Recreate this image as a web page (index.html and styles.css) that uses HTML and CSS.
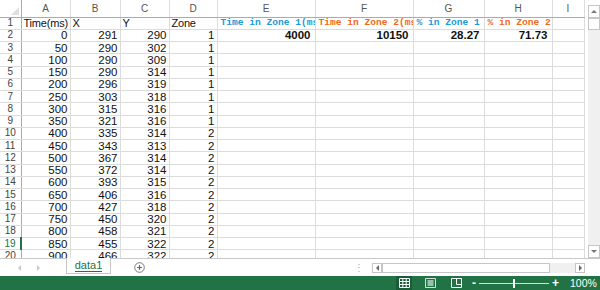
FILE: index.html
```html
<!DOCTYPE html>
<html lang="ja">
<head>
  <meta charset="UTF-8" />
  <title>data1 - Excel</title>
  <link rel="stylesheet" href="styles.css">
</head>
<body>
  <div class="app">

    <div class="sheet">
      <table class="grid">
        <colgroup>
          <col style="width:21px"><col style="width:49px"><col style="width:50px"><col style="width:49px">
          <col style="width:48px"><col style="width:98px"><col style="width:98px"><col style="width:71px">
          <col style="width:68px"><col style="width:32px">
        </colgroup>
        <tr class="hdr">
          <th class="corner"><span class="tri"></span></th>
          <th>A</th><th>B</th><th>C</th><th>D</th><th>E</th><th>F</th><th>G</th><th>H</th><th>I</th>
        </tr>
        <tr>
          <td class="rh">1</td>
          <td class="txt">Time(ms)</td><td class="txt">X</td><td class="txt">Y</td><td class="txt">Zone</td>
          <td class="txt lbl blue">Time in Zone 1(ms)</td>
          <td class="txt lbl orange">Time in Zone 2(ms)</td>
          <td class="txt lbl blue">% in Zone 1</td>
          <td class="txt lbl orange">% in Zone 2</td>
          <td></td>
        </tr>
        <tr><td class="rh">2</td><td>0</td><td>291</td><td>290</td><td>1</td><td class="b">4000</td><td class="b">10150</td><td class="b">28.27</td><td class="b">71.73</td><td></td></tr>
        <tr><td class="rh">3</td><td>50</td><td>290</td><td>302</td><td>1</td><td></td><td></td><td></td><td></td><td></td></tr>
        <tr><td class="rh">4</td><td>100</td><td>290</td><td>309</td><td>1</td><td></td><td></td><td></td><td></td><td></td></tr>
        <tr><td class="rh">5</td><td>150</td><td>290</td><td>314</td><td>1</td><td></td><td></td><td></td><td></td><td></td></tr>
        <tr><td class="rh">6</td><td>200</td><td>296</td><td>319</td><td>1</td><td></td><td></td><td></td><td></td><td></td></tr>
        <tr><td class="rh">7</td><td>250</td><td>303</td><td>318</td><td>1</td><td></td><td></td><td></td><td></td><td></td></tr>
        <tr><td class="rh">8</td><td>300</td><td>315</td><td>316</td><td>1</td><td></td><td></td><td></td><td></td><td></td></tr>
        <tr><td class="rh">9</td><td>350</td><td>321</td><td>316</td><td>1</td><td></td><td></td><td></td><td></td><td></td></tr>
        <tr><td class="rh">10</td><td>400</td><td>335</td><td>314</td><td>2</td><td></td><td></td><td></td><td></td><td></td></tr>
        <tr><td class="rh">11</td><td>450</td><td>343</td><td>313</td><td>2</td><td></td><td></td><td></td><td></td><td></td></tr>
        <tr><td class="rh">12</td><td>500</td><td>367</td><td>314</td><td>2</td><td></td><td></td><td></td><td></td><td></td></tr>
        <tr><td class="rh">13</td><td>550</td><td>372</td><td>314</td><td>2</td><td></td><td></td><td></td><td></td><td></td></tr>
        <tr><td class="rh">14</td><td>600</td><td>393</td><td>315</td><td>2</td><td></td><td></td><td></td><td></td><td></td></tr>
        <tr><td class="rh">15</td><td>650</td><td>406</td><td>316</td><td>2</td><td></td><td></td><td></td><td></td><td></td></tr>
        <tr><td class="rh">16</td><td>700</td><td>427</td><td>318</td><td>2</td><td></td><td></td><td></td><td></td><td></td></tr>
        <tr><td class="rh">17</td><td>750</td><td>450</td><td>320</td><td>2</td><td></td><td></td><td></td><td></td><td></td></tr>
        <tr><td class="rh">18</td><td>800</td><td>458</td><td>321</td><td>2</td><td></td><td></td><td></td><td></td><td></td></tr>
        <tr><td class="rh active">19</td><td>850</td><td>455</td><td>322</td><td>2</td><td></td><td></td><td></td><td></td><td></td></tr>
        <tr><td class="rh">20</td><td>900</td><td>466</td><td>322</td><td>2</td><td></td><td></td><td></td><td></td><td></td></tr>
      </table>

      <div class="vscroll">
        <div class="sbtn"><span class="arr up"></span></div>
        <div class="thumb"></div>
        <div class="track"></div>
        <div class="sbtn"><span class="arr down"></span></div>
      </div>
    </div>

    <div class="tabs">
      <div class="nav"><span class="arr left"></span><span class="arr right"></span></div>
      <div class="tab">data1</div>
      <div class="add">
        <svg width="11" height="11" viewBox="0 0 11 11"><circle cx="5.5" cy="5.5" r="4.8" fill="none" stroke="#777" stroke-width="1"/><path d="M5.5 3v5M3 5.5h5" stroke="#666" stroke-width="1.2"/></svg>
      </div>
      <div class="hscroll">
        <span class="dots">⋮</span>
        <div class="sbtn"><span class="arr left dark"></span></div>
        <div class="htrack"><div class="hthumb"></div></div>
        <div class="sbtn"><span class="arr right dark"></span></div>
      </div>
    </div>

    <div class="status">
      <div class="views">
        <span class="view on">
          <svg width="11" height="10" viewBox="0 0 11 10"><path d="M0.5 0.5h10v9h-10zM0.5 3.5h10M0.5 6.5h10M3.8 0.5v9M7.2 0.5v9" fill="none" stroke="#fff" stroke-width="1"/></svg>
        </span>
        <span class="view">
          <svg width="11" height="10" viewBox="0 0 11 10"><path d="M0.5 0.5h10v9h-10z" fill="none" stroke="#cfe3d6" stroke-width="1"/><path d="M2.5 2h6v6h-6z" fill="#cfe3d6" opacity=".7"/></svg>
        </span>
        <span class="view">
          <svg width="11" height="10" viewBox="0 0 11 10"><path d="M0.5 0.5h10v9h-10zM5.5 0.5v6h5" fill="none" stroke="#fff" stroke-width="1"/></svg>
        </span>
      </div>
      <div class="zoom">
        <span class="minus">-</span>
        <div class="slider"><span class="knob"></span></div>
        <span class="plus">+</span>
        <span class="pct">100%</span>
      </div>
    </div>

  </div>
</body>
</html>
```

FILE: styles.css
```css
body {
  margin: 0;
  padding: 0;
  background: #fff;
  font-family: "Liberation Sans", Arial, sans-serif;
}

.app {
  width: 600px;
  height: 290px;
  overflow: hidden;
  display: flex;
  flex-direction: column;
}

/* grid area */
.sheet {
  height: 258px;
  flex-shrink: 0;
  display: flex;
  overflow: hidden;
}

.grid {
  border-collapse: collapse;
  table-layout: fixed;
  width: 584px;
  font-size: 11.5px;
  color: #111;
  align-self: flex-start;
}

.grid tr {
  height: 12.25px;
}

.grid tr.hdr {
  height: 17px;
}

.grid th {
  font-weight: normal;
  font-size: 10px;
  color: #555;
  border-right: 1px solid #dcdcdc;
  border-bottom: 1px solid #ababab;
  padding: 0;
  text-align: center;
  background: #fff;
}

.grid th.corner {
  position: relative;
  border-right: 1px solid #ababab;
}

.tri {
  position: absolute;
  right: 2px;
  bottom: 2px;
  width: 0;
  height: 0;
  border-left: 8px solid transparent;
  border-bottom: 8px solid #dfdfdf;
}

.grid td {
  border: 1px solid #dcdcdc;
  padding: 0 2px 0 0;
  line-height: 10px;
  text-align: right;
  white-space: nowrap;
  overflow: hidden;
}

.grid td.rh {
  text-align: center;
  color: #444;
  font-size: 10px;
  padding: 0;
  border-left: none;
  border-right: 1px solid #ababab;
}

.grid td.rh.active {
  color: #217346;
  border-right: 2px solid #217346;
}

.grid td.txt {
  text-align: left;
  font-size: 11px;
  letter-spacing: -0.2px;
  padding: 0 0 0 2px;
}

.grid td.lbl {
  font-family: "Liberation Mono", "DejaVu Sans Mono", monospace;
  font-weight: bold;
  font-size: 9.6px;
  letter-spacing: 0;
  padding-left: 3px;
}

.blue { color: #1e9ad6; }
.orange { color: #f26a21; }

.grid td.b {
  font-weight: bold;
  padding-right: 4px;
}

/* vertical scrollbar */
.vscroll {
  width: 13px;
  margin-left: 3px;
  margin-top: 5px;
  height: 253px;
  background: #f0f0f0;
  display: flex;
  flex-direction: column;
}

.vscroll .sbtn {
  height: 11px;
  border: 1px solid #c6c6c6;
  background: #fff;
  display: flex;
  align-items: center;
  justify-content: center;
}

.vscroll .thumb {
  height: 10px;
  border: 1px solid #c6c6c6;
  background: #fff;
}

.vscroll .track {
  flex: 1;
}

.arr {
  width: 0;
  height: 0;
  display: inline-block;
}

.arr.up {
  border-left: 3px solid transparent;
  border-right: 3px solid transparent;
  border-bottom: 3px solid #777;
}

.arr.down {
  border-left: 3px solid transparent;
  border-right: 3px solid transparent;
  border-top: 3px solid #777;
}

.arr.left {
  border-top: 3px solid transparent;
  border-bottom: 3px solid transparent;
  border-right: 3px solid #c8c8c8;
}

.arr.right {
  border-top: 3px solid transparent;
  border-bottom: 3px solid transparent;
  border-left: 3px solid #c8c8c8;
}

.arr.dark.left { border-right-color: #666; }
.arr.dark.right { border-left-color: #666; }

/* sheet tabs */
.tabs {
  height: 18px;
  flex-shrink: 0;
  border-top: 1px solid #c8c8c8;
  box-sizing: border-box;
  display: flex;
  align-items: flex-start;
  background: #fff;
}

.nav {
  width: 66px;
  display: flex;
  gap: 16px;
  padding-left: 18px;
  box-sizing: border-box;
  height: 17px;
  align-items: center;
}

.tab {
  width: 45px;
  height: 16px;
  margin-top: -1px;
  border-left: 1px solid #c8c8c8;
  border-right: 1px solid #c8c8c8;
  border-bottom: 1px solid #c8c8c8;
  background: #fff;
  color: #217346;
  font-size: 11px;
  text-align: center;
  line-height: 15px;
  box-sizing: border-box;
  position: relative;
}

.tab::after {
  content: "";
  position: absolute;
  left: 8px;
  right: 8px;
  bottom: 1px;
  border-bottom: 1px solid #217346;
}

.add {
  margin-left: 23px;
  height: 17px;
  display: flex;
  align-items: center;
}

.hscroll {
  margin-left: auto;
  margin-right: 15px;
  display: flex;
  align-items: center;
  height: 17px;
}

.dots {
  color: #aaa;
  font-size: 10px;
  margin-right: 8px;
}

.hscroll .sbtn {
  width: 10px;
  height: 10px;
  border: 1px solid #c6c6c6;
  display: flex;
  align-items: center;
  justify-content: center;
  box-sizing: border-box;
}

.htrack {
  width: 193px;
  height: 10px;
  background: #f0f0f0;
}

.hthumb {
  width: 168px;
  height: 10px;
  box-sizing: border-box;
  border: 1px solid #c6c6c6;
  background: #fff;
}

/* status bar */
.status {
  flex: 1;
  background: #217346;
  color: #fff;
  display: flex;
  align-items: center;
  font-size: 10px;
}

.views {
  margin-left: 396px;
  display: flex;
  gap: 10px;
}

.view {
  display: flex;
  align-items: center;
  justify-content: center;
  width: 16px;
  height: 14px;
}

.view.on {
  background: #1a5c38;
}

.zoom {
  display: flex;
  align-items: center;
  margin-left: 8px;
}

.minus {
  font-size: 12px;
  font-weight: bold;
  margin-right: 3px;
}

.slider {
  width: 70px;
  height: 1px;
  background: #cfe3d6;
  position: relative;
}

.knob {
  position: absolute;
  left: 34px;
  top: -4px;
  width: 2px;
  height: 9px;
  background: #fff;
}

.plus {
  font-size: 12px;
  font-weight: bold;
  margin-left: 3px;
}

.pct {
  margin-left: 11px;
  font-size: 10.5px;
}
```
